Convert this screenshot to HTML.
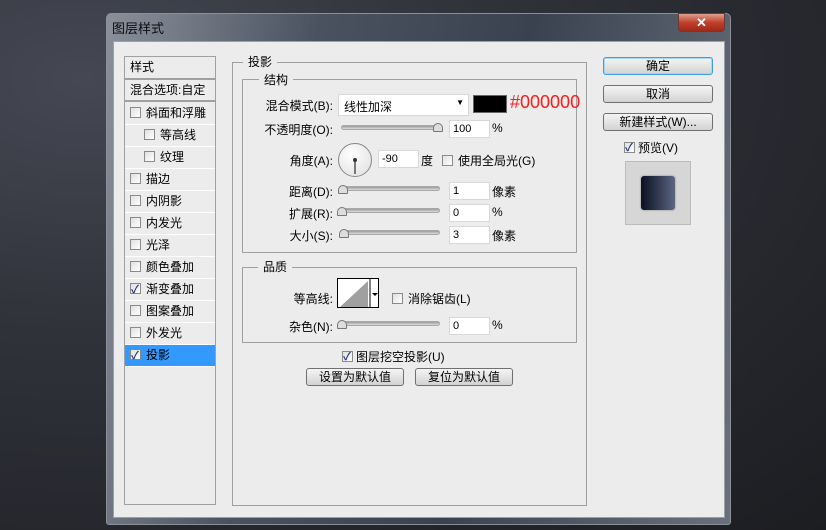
<!DOCTYPE html>
<html><head><meta charset="utf-8"><style>
*{margin:0;padding:0;box-sizing:border-box}
body{width:826px;height:530px;overflow:hidden;position:relative;background:radial-gradient(ellipse at 10% 15%,#454853 0%,#30323a 40%,#1c1d21 100%);font-family:"Liberation Sans","Noto Sans CJK SC","WenQuanYi Zen Hei",sans-serif;font-size:12px;color:#000}
.a{position:absolute}
.dlg{left:106px;top:13px;width:625px;height:512px;border-radius:5px 5px 3px 3px;background:linear-gradient(100deg,#8a909a 0%,#4a5260 30%,#3a4250 60%,#6a717c 100%);border:1px solid #8a8f98}
.content{left:113px;top:41px;width:612px;height:477px;background:#ececec;border:1px solid #9aa0aa}
.title{left:112px;top:18px;font-size:13px;color:#0a0c10}
.close{left:678px;top:13px;width:47px;height:19px;border-radius:0 0 4px 4px;background:linear-gradient(#e0a090,#c0402a 50%,#a02818);border:1px solid #6a3a34;color:#fff;font-weight:bold;text-align:center;font-size:13px;line-height:17px}
.fs{border:1px solid #a0a0a0}
.leg{background:#ececec;padding:0 5px;font-size:12px}
.list{left:124px;top:56px;width:92px;height:449px;border:1px solid #a0a0a0;background:#ececec}
.row{position:absolute;left:0;width:90px;height:22px;border-bottom:1px solid #fff;line-height:21px;font-size:12px}
.cb{display:inline-block;width:11px;height:11px;border:1px solid #8a8a8a;background:linear-gradient(135deg,#e0e0e0,#fff);vertical-align:-1px;margin-right:5px;position:relative}
.cb.on::after{content:"✓";position:absolute;left:0;top:-4px;font-size:11px;color:#2a3a8a;font-weight:bold}
.inp{background:#fff;border:1px solid #d8d8d8;height:18px;width:41px;padding-left:3px;line-height:17px;font-size:11px}
.sl{height:5px;width:99px;border-radius:3px;background:linear-gradient(#9a9a9a,#dcdcdc);border:1px solid #a8a8a8}
.lbl{text-align:right;width:100px;font-size:12px}
.btn{border:1px solid #707070;border-radius:3px;background:linear-gradient(#f4f4f4,#e4e4e4 50%,#d2d2d2);text-align:center;font-size:12px;line-height:16px}
.thumb{width:10px;height:9px;background:#ddd;border:1px solid #777;border-radius:5px 5px 1px 1px}
</style></head><body>
<div class="a dlg"></div>
<div class="a title">图层样式</div>
<div class="a close">✕</div>
<div class="a content"></div>

<div class="a list">
<div class="row" style="top:0;height:23px;padding-left:5px;border-bottom:2px solid #a0a0a0">样式</div>
<div class="row" style="top:23px;padding-left:5px;border-bottom:2px solid #a0a0a0">混合选项:自定</div>
<div class="row" style="top:46px;padding-left:5px"><span class="cb"></span>斜面和浮雕</div>
<div class="row" style="top:68px;padding-left:19px"><span class="cb"></span>等高线</div>
<div class="row" style="top:90px;padding-left:19px"><span class="cb"></span>纹理</div>
<div class="row" style="top:112px;padding-left:5px"><span class="cb"></span>描边</div>
<div class="row" style="top:134px;padding-left:5px"><span class="cb"></span>内阴影</div>
<div class="row" style="top:156px;padding-left:5px"><span class="cb"></span>内发光</div>
<div class="row" style="top:178px;padding-left:5px"><span class="cb"></span>光泽</div>
<div class="row" style="top:200px;padding-left:5px"><span class="cb"></span>颜色叠加</div>
<div class="row" style="top:222px;padding-left:5px"><span class="cb on"></span>渐变叠加</div>
<div class="row" style="top:244px;padding-left:5px"><span class="cb"></span>图案叠加</div>
<div class="row" style="top:266px;padding-left:5px"><span class="cb"></span>外发光</div>
<div class="row" style="top:288px;padding-left:5px;background:#3399ff"><span class="cb on"></span>投影</div>
</div>

<div class="a fs" style="left:232px;top:62px;width:355px;height:444px"></div>
<div class="a leg" style="left:243px;top:53px">投影</div>
<div class="a fs" style="left:242px;top:79px;width:335px;height:174px"></div>
<div class="a leg" style="left:259px;top:71px">结构</div>

<div class="a lbl" style="left:233px;top:97px">混合模式(B):</div>
<div class="a" style="left:338px;top:94px;width:131px;height:22px;background:#fff;border:1px solid #d8d8d8;padding:3px 5px;font-size:12px">线性加深<span style="position:absolute;right:4px;top:3px;font-size:8px">▼</span></div>
<div class="a" style="left:473px;top:95px;width:34px;height:18px;background:#000;border:1px solid #666"></div>
<div class="a" style="left:510px;top:92px;color:#ff1a1a;font-size:18px">#000000</div>

<div class="a lbl" style="left:233px;top:121px">不透明度(O):</div>
<div class="a sl" style="left:341px;top:125px"></div>
<div class="a thumb" style="left:433px;top:123px"></div>
<div class="a inp" style="left:449px;top:120px">100</div>
<div class="a" style="left:492px;top:121px">%</div>

<div class="a lbl" style="left:233px;top:152px">角度(A):</div>
<div class="a" style="left:338px;top:143px;width:34px;height:34px;border-radius:50%;border:1px solid #888;background:radial-gradient(circle at 40% 35%,#fff,#ddd)"></div>
<div class="a" style="left:354px;top:159px;width:2px;height:15px;background:#777"></div>
<div class="a" style="left:353px;top:158px;width:4px;height:4px;border-radius:2px;background:#333"></div>
<div class="a inp" style="left:378px;top:150px">-90</div>
<div class="a" style="left:421px;top:152px">度</div>
<div class="a" style="left:442px;top:152px"><span class="cb"></span>使用全局光(G)</div>

<div class="a lbl" style="left:233px;top:183px">距离(D):</div>
<div class="a sl" style="left:341px;top:186px"></div>
<div class="a thumb" style="left:338px;top:185px"></div>
<div class="a inp" style="left:449px;top:182px">1</div>
<div class="a" style="left:492px;top:183px">像素</div>

<div class="a lbl" style="left:233px;top:205px">扩展(R):</div>
<div class="a sl" style="left:341px;top:208px"></div>
<div class="a thumb" style="left:337px;top:207px"></div>
<div class="a inp" style="left:449px;top:204px">0</div>
<div class="a" style="left:492px;top:205px">%</div>

<div class="a lbl" style="left:233px;top:227px">大小(S):</div>
<div class="a sl" style="left:341px;top:230px"></div>
<div class="a thumb" style="left:339px;top:229px"></div>
<div class="a inp" style="left:449px;top:226px">3</div>
<div class="a" style="left:492px;top:227px">像素</div>

<div class="a fs" style="left:242px;top:267px;width:335px;height:76px"></div>
<div class="a leg" style="left:258px;top:258px">品质</div>
<div class="a lbl" style="left:233px;top:290px">等高线:</div>
<div class="a" style="left:337px;top:278px;width:42px;height:30px;border:1px solid #000;background:#fff;overflow:hidden">
<svg width="42" height="30" style="position:absolute;left:0;top:0"><polygon points="2,28 30,2 30,28" fill="#a0a0a0"/><line x1="32" y1="0" x2="32" y2="30" stroke="#000"/><polygon points="34,14 40,14 37,17" fill="#000"/></svg></div>
<div class="a" style="left:392px;top:290px"><span class="cb"></span>消除锯齿(L)</div>
<div class="a lbl" style="left:233px;top:318px">杂色(N):</div>
<div class="a sl" style="left:341px;top:321px"></div>
<div class="a thumb" style="left:337px;top:320px"></div>
<div class="a inp" style="left:449px;top:317px">0</div>
<div class="a" style="left:492px;top:318px">%</div>

<div class="a" style="left:342px;top:348px"><span class="cb on" style="margin-right:3px"></span>图层挖空投影(U)</div>
<div class="a btn" style="left:306px;top:368px;width:98px;height:18px">设置为默认值</div>
<div class="a btn" style="left:415px;top:368px;width:98px;height:18px">复位为默认值</div>

<div class="a btn" style="left:603px;top:57px;width:110px;height:18px;border-color:#3c9ee0;box-shadow:0 0 0 1px #a8d8f8 inset">确定</div>
<div class="a btn" style="left:603px;top:85px;width:110px;height:18px">取消</div>
<div class="a btn" style="left:603px;top:113px;width:110px;height:18px">新建样式(W)...</div>
<div class="a" style="left:624px;top:139px"><span class="cb on" style="margin-right:3px"></span>预览(V)</div>
<div class="a" style="left:625px;top:161px;width:66px;height:64px;background:#d6d6d6;border:1px solid #bbb"></div>
<div class="a" style="left:641px;top:176px;width:34px;height:34px;border-radius:3px;background:linear-gradient(90deg,#0c1020,#2a3248 40%,#5c6682);box-shadow:0 0 2px #888"></div>
</body></html>
